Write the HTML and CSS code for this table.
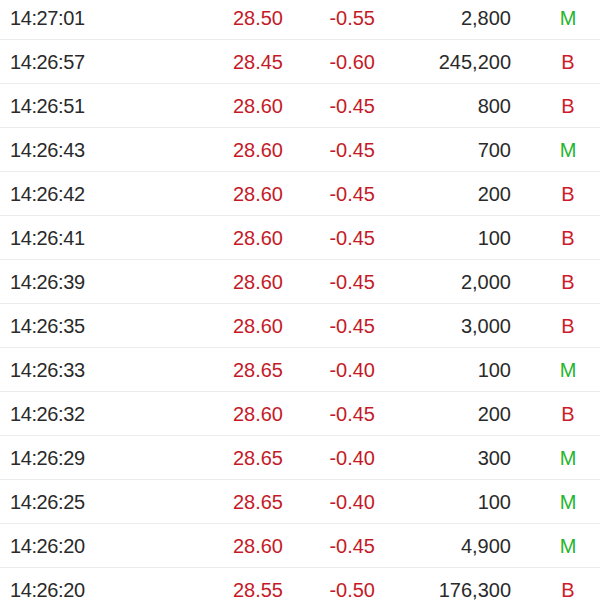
FILE: index.html
```html
<!DOCTYPE html>
<html>
<head>
<meta charset="utf-8">
<link rel="stylesheet" href="styles.css">
</head>
<body>
<div class="list">
  <div class="row"><span class="t">14:27:01</span><span class="p">28.50</span><span class="c">-0.55</span><span class="v">2,800</span><span class="k m">M</span></div>
  <div class="row"><span class="t">14:26:57</span><span class="p">28.45</span><span class="c">-0.60</span><span class="v">245,200</span><span class="k b">B</span></div>
  <div class="row"><span class="t">14:26:51</span><span class="p">28.60</span><span class="c">-0.45</span><span class="v">800</span><span class="k b">B</span></div>
  <div class="row"><span class="t">14:26:43</span><span class="p">28.60</span><span class="c">-0.45</span><span class="v">700</span><span class="k m">M</span></div>
  <div class="row"><span class="t">14:26:42</span><span class="p">28.60</span><span class="c">-0.45</span><span class="v">200</span><span class="k b">B</span></div>
  <div class="row"><span class="t">14:26:41</span><span class="p">28.60</span><span class="c">-0.45</span><span class="v">100</span><span class="k b">B</span></div>
  <div class="row"><span class="t">14:26:39</span><span class="p">28.60</span><span class="c">-0.45</span><span class="v">2,000</span><span class="k b">B</span></div>
  <div class="row"><span class="t">14:26:35</span><span class="p">28.60</span><span class="c">-0.45</span><span class="v">3,000</span><span class="k b">B</span></div>
  <div class="row"><span class="t">14:26:33</span><span class="p">28.65</span><span class="c">-0.40</span><span class="v">100</span><span class="k m">M</span></div>
  <div class="row"><span class="t">14:26:32</span><span class="p">28.60</span><span class="c">-0.45</span><span class="v">200</span><span class="k b">B</span></div>
  <div class="row"><span class="t">14:26:29</span><span class="p">28.65</span><span class="c">-0.40</span><span class="v">300</span><span class="k m">M</span></div>
  <div class="row"><span class="t">14:26:25</span><span class="p">28.65</span><span class="c">-0.40</span><span class="v">100</span><span class="k m">M</span></div>
  <div class="row"><span class="t">14:26:20</span><span class="p">28.60</span><span class="c">-0.45</span><span class="v">4,900</span><span class="k m">M</span></div>
  <div class="row"><span class="t">14:26:20</span><span class="p">28.55</span><span class="c">-0.50</span><span class="v">176,300</span><span class="k b">B</span></div>
</div>
</body>
</html>
```
FILE: styles.css
```css
html, body {
  margin: 0;
  padding: 0;
  background: #ffffff;
  overflow: hidden;
}
.list {
  margin-top: -4px;
  font-family: "Liberation Sans", Arial, sans-serif;
  font-size: 20px;
  color: #2a2a2a;
}
.row {
  display: grid;
  grid-template-columns: 190px 83px 92px 136px 87px;
  align-items: center;
  height: 43px;
  padding-left: 10px;
  border-bottom: 1px solid #ececec;
}
.row > span {
  padding-top: 2px;
}
.t { text-align: left; letter-spacing: -0.4px; }
.p, .c, .v { text-align: right; }
.p, .c { color: #c41a27; }
.k { text-align: center; padding-left: 27px; }
.m { color: #25b52d; }
.b { color: #cc1b2a; }
```
